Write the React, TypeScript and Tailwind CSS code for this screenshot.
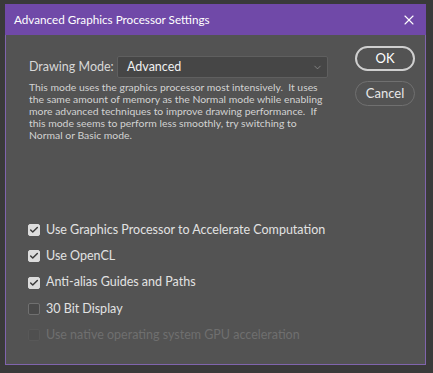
import { Check, ChevronDown, X } from "lucide-react";

const font = { fontFamily: 'Lato, "Noto Sans", sans-serif' };

interface OptionType {
  label: string;
  checked: boolean;
  disabled?: boolean;
}

const options: OptionType[] = [
  { label: "Use Graphics Processor to Accelerate Computation", checked: true },
  { label: "Use OpenCL", checked: true },
  { label: "Anti-alias Guides and Paths", checked: true },
  { label: "30 Bit Display", checked: false },
  { label: "Use native operating system GPU acceleration", checked: false, disabled: true },
];

const CheckRow = ({ option }: { option: OptionType }) => {
  let box = "border border-[#707070] bg-[#4a4a4a]";
  if (option.checked) box = "bg-[#dcdcdc] border border-[#dcdcdc]";
  if (option.disabled) box = "border border-[#585858] bg-[#4f4f4f]";
  return (
    <div className="flex items-center h-[26.3px]">
      <div className={`w-[12px] h-[12px] rounded-[2px] flex items-center justify-center ${box}`}>
        {option.checked && <Check size={10} strokeWidth={3.5} color="#3a3a3a" />}
      </div>
      <span
        className={`ml-[6px] text-[12.5px] whitespace-nowrap ${option.disabled ? "text-[#6f6f6f]" : "text-[#e2e2e2]"}`}
      >
        {option.label}
      </span>
    </div>
  );
};

export default function App() {
  return (
    <div className="w-[433px] h-[373px] bg-[#3a3a3a] overflow-hidden pt-[4px] pl-[5px]" style={font}>
      <div className="w-[421px] h-[361px] flex flex-col bg-[#535353] border border-t-0 border-[#8064ad]">
        <div className="h-[31px] -mx-px bg-[#7049a8] flex items-center justify-between pl-[9px] pr-[9px]">
          <span className="text-white text-[11.7px] whitespace-nowrap">Advanced Graphics Processor Settings</span>
          <X size={16} strokeWidth={1.6} color="#ffffff" />
        </div>
        <div className="flex flex-1">
          <div className="flex flex-col pl-[22px] w-[328px]">
            <div className="flex items-center mt-[21px] h-[22px]">
              <span className="text-[12.5px] text-[#d8d8d8] ml-[1px] w-[88px] shrink-0 whitespace-nowrap">Drawing Mode:</span>
              <div className="w-[211px] h-[22px] bg-[#464646] border border-[#5f5f5f] rounded-[2px] flex items-center justify-between pl-[9px] pr-[4px]">
                <span className="text-[12.5px] text-[#f0f0f0]">Advanced</span>
                <ChevronDown size={11} strokeWidth={1.5} color="#9a9a9a" />
              </div>
            </div>
            <p className="mt-[3px] ml-[1px] text-[10.4px] leading-[12px] text-[#d2d2d2] whitespace-pre">
              {"This mode uses the graphics processor most intensively.  It uses\nthe same amount of memory as the Normal mode while enabling\nmore advanced techniques to improve drawing performance.  If\nthis mode seems to perform less smoothly, try switching to\nNormal or Basic mode."}
            </p>
            <div className="flex flex-col mt-[76px]">
              {options.map((option) => (
                <CheckRow key={option.label} option={option} />
              ))}
            </div>
          </div>
          <div className="flex flex-col gap-[10px] pt-[11px] ml-[21px]">
            <button className="w-[60px] h-[25px] rounded-full border-2 border-[#cfcfcf] text-[13px] text-white">
              OK
            </button>
            <button className="w-[60px] h-[25px] rounded-full border border-[#707070] text-[13px] text-[#e8e8e8]">
              Cancel
            </button>
          </div>
        </div>
      </div>
    </div>
  );
}
